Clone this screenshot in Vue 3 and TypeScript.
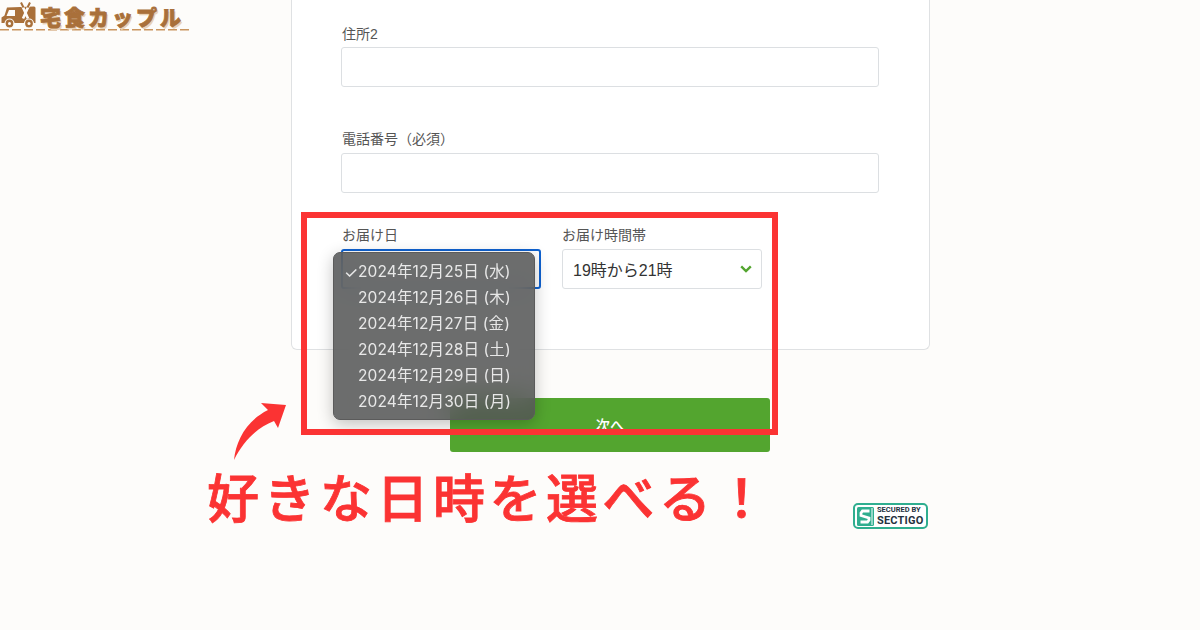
<script setup lang="ts">
const days: string[] = [
  '2024年12月25日 (水)',
  '2024年12月26日 (木)',
  '2024年12月27日 (金)',
  '2024年12月28日 (土)',
  '2024年12月29日 (日)',
  '2024年12月30日 (月)',
]
</script>

<template>
  <div class="page">
    <main class="column">
      <section class="card">
        <div class="field">
          <label class="label">住所2</label>
          <div class="input"></div>
        </div>
        <div class="field">
          <label class="label">電話番号（必須）</label>
          <div class="input"></div>
        </div>
        <div class="pair">
          <div class="cell">
            <label class="label">お届け日</label>
            <div class="input select focus"></div>
          </div>
          <div class="cell">
            <label class="label second">お届け時間帯</label>
            <div class="input select">
              <span class="value">19時から21時</span>
              <svg class="chev" width="12" height="8" viewBox="0 0 12 8"><path d="M1.200 1.400 6 6l4.800-4.600" fill="none" stroke="#53a52f" stroke-width="2.400" /></svg>
            </div>
          </div>
        </div>
      </section>
      <button class="next">次へ</button>
      <div class="badge">
        <svg class="badge-s" width="17" height="19" viewBox="0 0 17 19">
          <rect width="17" height="19" rx="1.500" fill="#2fae8f" />
          <path d="M12.500 4H5.500L4 6v2.500l8 2.500V13l-1.500 2H3.500" fill="none" stroke="#fff" stroke-width="2.800" />
          <path d="M15 1v17" stroke="#fff" stroke-width="1" />
        </svg>
        <span class="badge-t"><small>SECURED BY</small><b>SECTIGO</b></span>
      </div>
    </main>

    <div class="logo">
      <svg class="van" width="38" height="29" viewBox="0 0 38 29">
        <path d="M7 7.500 34 6.500a1.500 1.500 0 0 1 1.500 1.500v15H1.500v-5.500l3-2z" fill="#a9703a" />
        <path d="M9 10h6v6H6.500z" fill="#fdfcfa" />
        <circle cx="9.500" cy="23.500" r="4.500" fill="#a9703a" stroke="#fdfcfa" stroke-width="1.200" />
        <circle cx="9.500" cy="23.500" r="1.500" fill="#fdfcfa" />
        <circle cx="29" cy="23.500" r="4.500" fill="#a9703a" stroke="#fdfcfa" stroke-width="1.200" />
        <circle cx="29" cy="23.500" r="1.500" fill="#fdfcfa" />
        <path d="M21.500 4l6.500 14.500M29.500 4l-6.500 14.500" stroke="#fdfcfa" stroke-width="2.600" />
        <path d="M21 2.500l2.500 5M30 2.500l-2.500 5" stroke="#a9703a" stroke-width="2" />
      </svg>
      <span class="logo-text">宅食カップル</span>
    </div>

    <div class="menu">
      <div v-for="(d, i) in days" :key="d" class="opt">
        <span class="tick">{{ i === 0 ? '✓' : '' }}</span>{{ d }}
      </div>
    </div>

    <div class="frame"></div>
    <svg class="arrow" width="60" height="62" viewBox="230 402 60 62">
      <path d="M234 460C236 441 246 421 268 410L261 403 286 405 278 428 274 421C256 428 243 442 234 460Z" fill="#fb3333" />
    </svg>
    <div class="shout">好きな日時を選べる！</div>
  </div>
</template>

<style>
html, body { margin: 0; background: #fdfcfa; }
</style>

<style scoped>
.page {
  position: relative;
  width: 1200px;
  height: 630px;
  overflow: hidden;
  background: #fdfcfa;
  font-family: "Liberation Sans", "Noto Sans CJK JP", sans-serif;
  color: #4a4a4a;
}
.column {
  width: 639px;
  margin-left: 291px;
  display: flex;
  flex-direction: column;
}
.card {
  box-sizing: border-box;
  height: 350px;
  padding: 24px 50px 0 49px;
  background: #fff;
  border: 1px solid #dfe1e3;
  border-top: none;
  border-radius: 0 0 6px 6px;
  display: flex;
  flex-direction: column;
}
.field { display: flex; flex-direction: column; margin-bottom: 42px; }
.field + .field { margin-bottom: 32px; }
.field + .field .label { height: 24px; }
.label {
  font-size: 14px;
  line-height: 20px;
  height: 23px;
  padding-left: 1px;
  color: #555;
}
.input {
  box-sizing: border-box;
  height: 40px;
  background: #fff;
  border: 1px solid #dcdfe2;
  border-radius: 3px;
}
.pair { display: grid; grid-template-columns: 200px 200px; column-gap: 21px; }
.cell { display: flex; flex-direction: column; }
.cell .label { height: 24px; }
.cell .second { padding-left: 0; }
.select { display: flex; align-items: center; justify-content: space-between; padding: 0 9px 0 10px; }
.focus { border: 2px solid #0f62d0; }
.value { font-size: 16px; color: #333; }
.next {
  align-self: flex-start;
  width: 320px;
  height: 54px;
  margin: 48px 0 0 159px;
  border: 0;
  border-radius: 3px;
  background: #53a52f;
  color: #fff;
  font: 500 14.500px "Noto Sans CJK JP", sans-serif;
  padding: 0 0 2px;
}
.badge {
  align-self: flex-end;
  box-sizing: border-box;
  width: 75px;
  height: 26px;
  margin: 51px 2px 0 0;
  border: 2px solid #2fae8f;
  border-radius: 5px;
  background: #fff;
  display: flex;
  align-items: center;
  gap: 3px;
  padding: 0 2px;
}
.badge-s { flex: none; }
.badge-t { display: flex; flex-direction: column; gap: 1px; color: #25323f; font-family: Roboto, sans-serif; line-height: 1; }
.badge-t small { font-size: 7.500px; font-weight: 700; white-space: nowrap; }
.badge-t b { font-size: 11px; letter-spacing: .2px; }
.logo {
  position: absolute;
  left: 0;
  top: 0;
  width: 190px;
  height: 31px;
  box-sizing: border-box;
  display: flex;
  align-items: flex-start;
  gap: 2px;
  background: repeating-linear-gradient(90deg, #c9955e 0 9px, transparent 9px 12px) left 29px / 100% 1.500px no-repeat;
}
.logo-text {
  margin-top: .5px;
  font: 900 21px/30px "Noto Sans CJK JP", sans-serif;
  color: #a9703a;
  letter-spacing: 3px;
  -webkit-text-stroke: .8px #a9703a;
  text-shadow: 1.500px 1.500px 0 #e9d2b6;
  white-space: nowrap;
}
.menu {
  position: absolute;
  left: 333px;
  top: 252px;
  box-sizing: border-box;
  width: 202px;
  height: 168px;
  padding: 6px 0;
  border-radius: 7px;
  border: 1px solid #5b5b5b;
  background: rgba(82, 84, 84, .85);
  backdrop-filter: blur(14px);
  box-shadow: 0 4px 16px rgba(0, 0, 0, .24);
  color: #e8e8e8;
}
.opt {
  height: 26px;
  display: flex;
  align-items: center;
  font: 15.500px/26px Inter, "Noto Sans CJK JP", sans-serif;
  letter-spacing: .12px;
  white-space: pre;
}
.tick { width: 24px; padding-left: 10px; box-sizing: border-box; font-size: 16px; }
.frame {
  position: absolute;
  left: 301px;
  top: 212px;
  width: 477px;
  height: 223px;
  box-sizing: border-box;
  border: 6px solid #fb3333;
}
.arrow { position: absolute; left: 230px; top: 402px; }
.shout {
  position: absolute;
  left: 207px;
  top: 466px;
  font: 500 52px/60px "Noto Sans CJK JP", sans-serif;
  -webkit-text-stroke: .8px #fb3333;
  letter-spacing: 4.500px;
  color: #fb3333;
  white-space: nowrap;
}
</style>
